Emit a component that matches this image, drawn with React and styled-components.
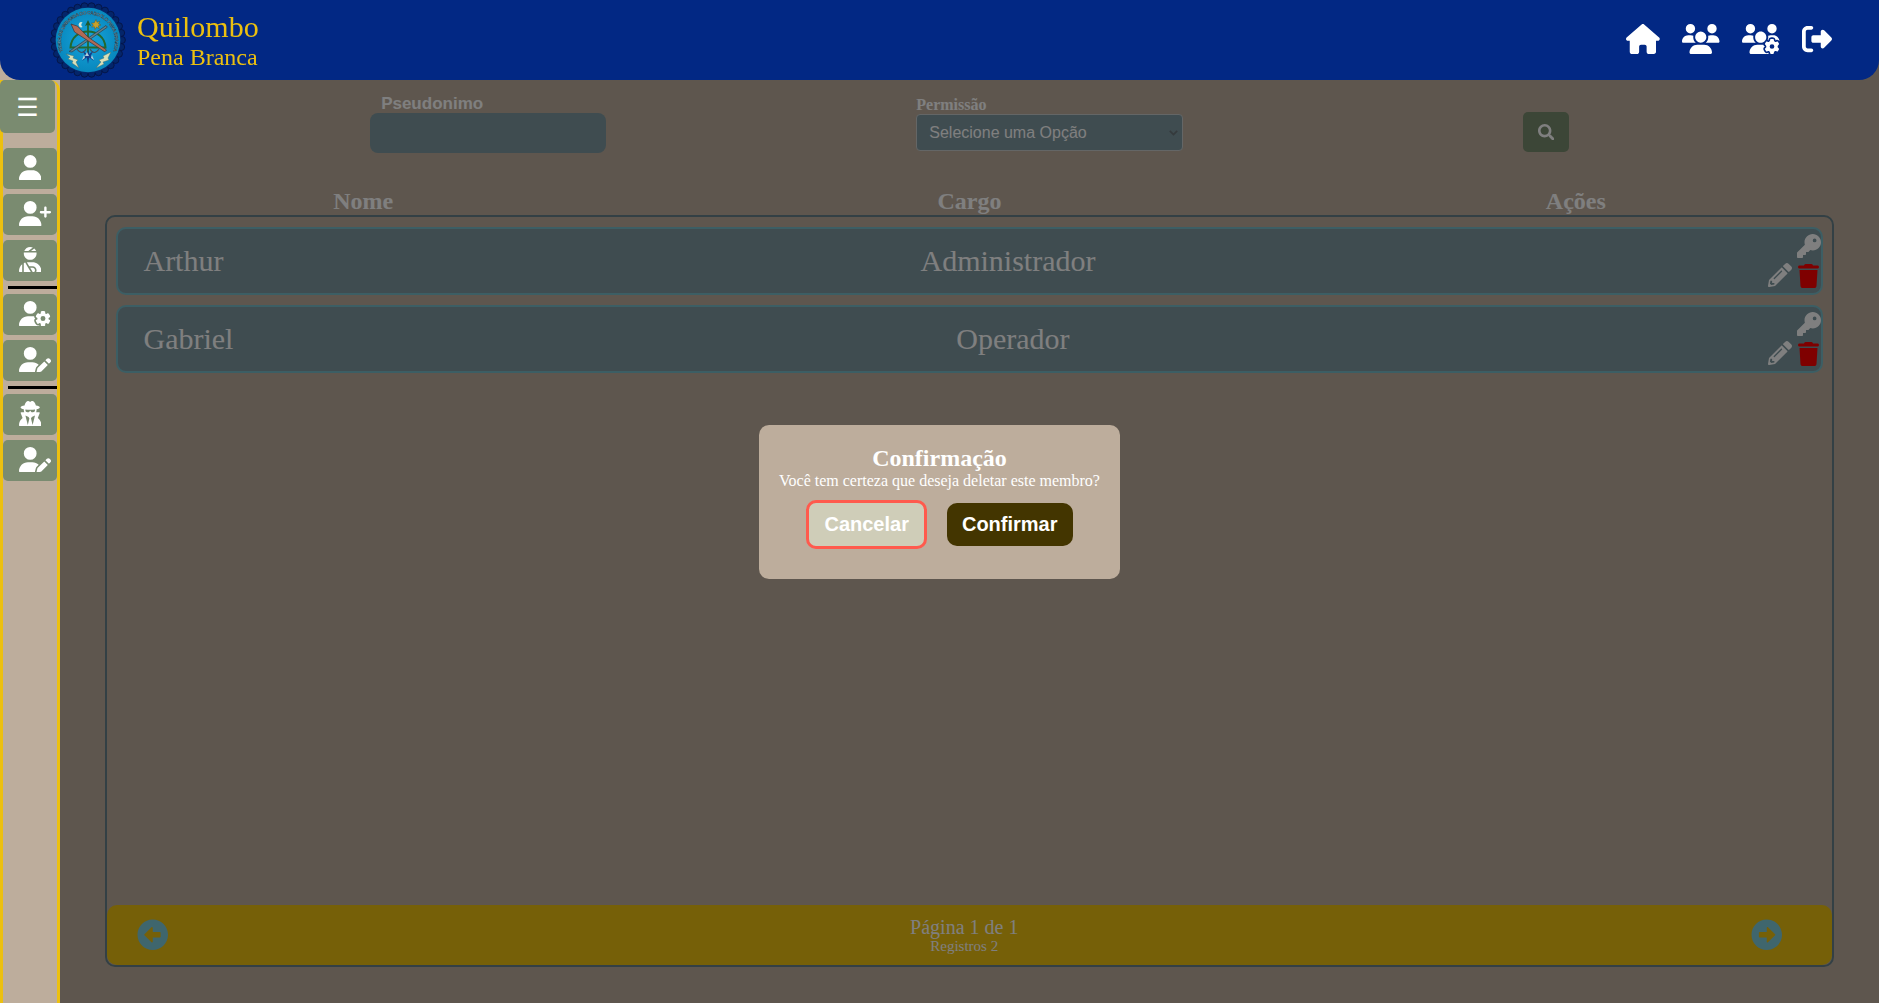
import React from "react";
import styled, { createGlobalStyle } from "styled-components";
import {
  FaHouse, FaUsers, FaUsersGear, FaRightFromBracket, FaUser, FaUserPlus,
  FaUserInjured, FaUserGear, FaUserPen, FaUserSecret, FaKey, FaTrash,
} from "react-icons/fa6";
import {
  FaSearch, FaPencilAlt, FaArrowAltCircleLeft, FaArrowAltCircleRight,
} from "react-icons/fa";

const serif = `"Liberation Serif", "Times New Roman", serif`;
const sans = `"Liberation Sans", Arial, sans-serif`;
const colors = {
  blue: "#022884",
  yellow: "#ecc010",
  sand: "#bdad9c",
  slate: "#7e98a0",
  teal: "#7eccda",
  moss: "#7a8b70",
};

const GlobalStyle = createGlobalStyle`
  *, *::before, *::after { box-sizing: border-box; margin: 0; padding: 0; }
  body { background: ${colors.sand}; color: #fff; font-family: ${serif}; overflow: hidden; }
  button { border: 0; color: inherit; font: inherit; cursor: pointer; }
  svg { display: block; flex: none; }
`;

const Page = styled.div`
  display: grid;
  grid-template: 80px 1fr / 60px 1fr;
  height: 100vh;
`;

const Header = styled.header`
  grid-area: 1 / 1 / 2 / 3;
  z-index: 4;
  display: flex;
  align-items: center;
  justify-content: space-between;
  padding: 0 47px 0 50px;
  background: ${colors.blue};
  border-radius: 0 0 20px 20px;
`;

const Brand = styled.div`
  display: flex;
  align-items: center;
  gap: 11px;
  color: ${colors.yellow};
`;

const BrandName = styled.h1`
  font-size: 30px;
  font-weight: 400;
  line-height: 34px;
`;

const BrandSub = styled.p`
  font-size: 24px;
  line-height: 27px;
`;

const Nav = styled.nav`
  display: flex;
  gap: 22.4px;
  font-size: 30px;
  padding-bottom: 2px;
`;

const HomeIcon = styled(FaHouse)`
  width: 1.125em;
`;

const MembersIcon = styled(FaUsers)`
  width: 1.25em;
`;

const MembersGearIcon = styled(FaUsersGear)`
  width: 1.25em;
`;

const Rail = styled.div`
  grid-area: 1 / 1 / 3 / 2;
  z-index: 3;
  display: flex;
  padding-top: 80px;
  background: ${colors.sand};
`;

const Sidebar = styled.aside`
  flex: 1;
  display: flex;
  flex-direction: column;
  gap: 5px;
  border: solid ${colors.yellow};
  border-width: 0 3px;
  border-radius: 0 10px 0 0;
`;

const MenuToggle = styled.button`
  width: 55px;
  height: 53px;
  margin: 0 0 10px -3px;
  border-radius: 5px;
  background: ${colors.moss};
  font: 25px/51px "DejaVu Sans", sans-serif;
  padding-top: 2px;
`;

const SideButton = styled.button`
  display: flex;
  align-items: center;
  height: 41px;
  padding: 0 0 2px 16px;
  border-radius: 5px;
  background: ${colors.moss};
  font-size: 25.6px;

  svg {
    width: ${(p) => (p.$wide ? "1.25em" : "0.875em")};
  }
`;

const Divider = styled.hr`
  height: 3px;
  margin-left: 5px;
  border: 0;
  background: #000;
`;

const Main = styled.main`
  grid-area: 2 / 2 / 3 / 3;
  display: flex;
  flex-direction: column;
`;

const Filters = styled.form`
  display: flex;
  justify-content: space-evenly;
  align-items: flex-start;
  height: 107px;
  padding-top: 13px;
`;

const Field = styled.div`
  display: flex;
  flex-direction: column;
`;

const PseudoLabel = styled.label`
  padding: 1px 0 0 11px;
  font: bold 17px/19px ${sans};
`;

const PseudoInput = styled.input`
  width: 236px;
  height: 40px;
  border: 0;
  border-radius: 8px;
  background: ${colors.slate};
`;

const RoleLabel = styled.label`
  padding-top: 3px;
  font: bold 16px/18px ${serif};
`;

const RoleSelect = styled.div`
  display: flex;
  align-items: center;
  justify-content: space-between;
  width: 266.5px;
  height: 37px;
  padding: 0 4px 0 12px;
  border: 1px solid #c8cccc;
  border-radius: 4px;
  background: ${colors.slate};
  font: 16px/18px ${sans};
`;

const SearchButton = styled.button`
  display: grid;
  place-items: center;
  width: 46px;
  height: 40px;
  margin: 19px 0 0 30px;
  border-radius: 5px;
  background: #788c6e;
  font-size: 16.5px;
`;

const Columns = styled.div`
  display: grid;
  grid-template-columns: repeat(3, 1fr);
  justify-items: center;
  height: 28px;
  font: bold 24px/28px ${serif};
`;

const Table = styled.section`
  display: flex;
  flex-direction: column;
  justify-content: space-between;
  align-self: center;
  width: 95%;
  height: 752px;
  border: 2px solid #66808a;
  border-radius: 10px;
`;

const Rows = styled.ul`
  display: grid;
  gap: 10px;
  padding: 10px 9px;
  list-style: none;
`;

const Row = styled.li`
  display: flex;
  align-items: center;
  justify-content: space-between;
  height: 68px;
  padding-left: 25px;
  border: 2px solid #78bcc8;
  border-radius: 10px;
  background: ${colors.slate};
  font-size: 30px;
`;

const Actions = styled.div`
  display: flex;
  flex-direction: column;
  align-items: flex-end;
  gap: 5px;
  width: 28px;
  padding-bottom: 1px;
  font-size: 24px;
`;

const ActionPair = styled.div`
  display: flex;
  gap: 6px;
  padding-right: 2px;
`;

const TrashIcon = styled(FaTrash)`
  width: 0.875em;
  margin-top: 1px;
  color: #f00;
`;

const Pager = styled.footer`
  display: flex;
  align-items: center;
  justify-content: space-between;
  height: 60px;
  padding: 0 49px 0 29.5px;
  border-radius: 10px;
  background: ${colors.yellow};
`;

const PagerButton = styled.button`
  background: none;
  color: ${colors.teal};
  font-size: 31.5px;
`;

const PagerText = styled.div`
  margin-left: 9px;
  text-align: center;
  font-size: 20px;
  line-height: 22px;
`;

const PagerCount = styled.p`
  font-size: 15px;
  line-height: 17px;
`;

const Overlay = styled.div`
  position: fixed;
  inset: 0;
  z-index: 2;
  display: grid;
  place-items: center;
  background: rgba(0, 0, 0, 0.5);
`;

const Dialog = styled.div`
  padding: 20px;
  border-radius: 10px;
  background: ${colors.sand};
  text-align: center;
`;

const DialogTitle = styled.h2`
  font-size: 24px;
  line-height: 27px;
`;

const DialogText = styled.p`
  font-size: 16px;
  line-height: 18px;
`;

const DialogActions = styled.div`
  display: flex;
  justify-content: center;
  align-items: center;
  gap: 20px;
  padding: 10px 0;
`;

const DialogButton = styled.button`
  padding: 10px 15px;
  border: ${(p) => (p.$cancel ? "3px solid #ff5a4d" : "0")};
  border-radius: 10px;
  background: ${(p) => (p.$cancel ? "#cfcdb8" : "#433500")};
  font: bold 20px/23px ${sans};
`;

const beads = Array.from({ length: 30 }, (_, i) => {
  const a = (i / 30) * Math.PI * 2;
  return [38 + 33.9 * Math.cos(a), 38 + 33.9 * Math.sin(a)];
});

const Crest = () => (
  <svg width="76" height="76" viewBox="0 0 76 76">
    <defs>
      <radialGradient id="sea">
        <stop offset="0" stopColor="#18a5dc" />
        <stop offset="1" stopColor="#0787bd" />
      </radialGradient>
      <path id="ring" d="M13 49.500A27 27 0 1 1 63 49.500" />
    </defs>
    {beads.map(([x, y], i) => (
      <circle key={i} cx={x} cy={y} r="3.5" fill="#04256a" stroke="#041445" strokeWidth=".9" />
    ))}
    <circle cx="38" cy="38" r="33.3" fill="#05286c" />
    <circle cx="38" cy="38" r="32.3" fill="url(#sea)" />
    <text fill="#a9bcc0" stroke="#17384c" strokeWidth=".35" fontFamily="Liberation Sans, sans-serif" fontWeight="700" fontSize="4.600">
      <textPath href="#ring" textLength="105">TENDA DE UMBANDA DO CABOCLO PENA BRANCA</textPath>
    </text>
    <path d="M32.6 20.600a2.6 2.6 0 1 0 0 4.4 2.5 2.5 0 0 1 0-4.4z" fill="#d5e7d8" />
    <path d="M46 17.5l1 2.8 2.8-1-1.3 2.6 2.5 1.1-2.7.8.8 2.8-2.5-1.5-1.6 2.4-.6-2.8-2.8.4 1.8-2.1-2-1.9 2.8-.2z" fill="#c7a12c" stroke="#574a20" strokeWidth=".4" />
    <path d="M20.500 45.500C21.500 24 54.500 24 55.500 45.500z" fill="none" stroke="#23682f" strokeWidth="2" />
    <path d="M38 53V22" stroke="#23652e" strokeWidth="1.700" />
    <path d="M38 18l3 6-3-1.300-3 1.300z" fill="#1e592f" />
    <path d="M19 49.500L56 23.500l1.300 1.700L22 50z" fill="#667f86" stroke="#283e4d" strokeWidth=".7" />
    <path d="M21 22l6.500 2.200L38 35 56.500 48l-1.700 1.800L36 37.500 24.500 30z" fill="#b16a55" stroke="#3c3436" strokeWidth=".7" />
    <path d="M27 47q5 7 9 0M49 47q-5 7-9 0" fill="none" stroke="#45515b" strokeWidth="1.200" />
    <path d="M38 48l1.200 4 4-3-2.500 5 3 5-4.500-3.500L38 62l-1.200-6.500L32.300 59l3-5-2.500-5 4 3z" fill="#123c8b" />
    <path d="M37 50l2 4h-4zM34 53l1 3-3 2zM42 53l-1 3 3 2z" fill="#b3ced8" />
    <path d="M16 52l8 2-1 2 5 2-2 2 3 6-7-5 1-2-5-2 2-2zM61 50l-8 4 1 2-5 2 2 2-5 6 8-4-1-2 6-2-1-2z" fill="#d8dfb9" stroke="#43645e" strokeWidth=".4" />
  </svg>
);

const sideItems = [
  { Icon: FaUser },
  { Icon: FaUserPlus, wide: true },
  { Icon: FaUserInjured },
  null,
  { Icon: FaUserGear, wide: true },
  { Icon: FaUserPen, wide: true },
  null,
  { Icon: FaUserSecret },
  { Icon: FaUserPen, wide: true },
];

const members = [
  { name: "Arthur", role: "Administrador" },
  { name: "Gabriel", role: "Operador" },
];

export default function App() {
  return (
    <Page>
      <GlobalStyle />
      <Header>
        <Brand>
          <Crest />
          <div>
            <BrandName>Quilombo</BrandName>
            <BrandSub>Pena Branca</BrandSub>
          </div>
        </Brand>
        <Nav>
          <HomeIcon />
          <MembersIcon />
          <MembersGearIcon />
          <FaRightFromBracket />
        </Nav>
      </Header>
      <Rail>
        <Sidebar>
          <MenuToggle>☰</MenuToggle>
          {sideItems.map((item, i) =>
            item ? (
              <SideButton key={i} $wide={item.wide}>
                <item.Icon />
              </SideButton>
            ) : (
              <Divider key={i} />
            )
          )}
        </Sidebar>
      </Rail>
      <Main>
        <Filters>
          <Field>
            <PseudoLabel>Pseudonimo</PseudoLabel>
            <PseudoInput />
          </Field>
          <Field>
            <RoleLabel>Permissão</RoleLabel>
            <RoleSelect>
              Selecione uma Opção
              <svg width="9" height="6" viewBox="0 0 9 6">
                <path d="M.8.8l3.700 3.700L8.200.8" fill="none" stroke="#6a7478" strokeWidth="1.700" />
              </svg>
            </RoleSelect>
          </Field>
          <SearchButton type="button"><FaSearch /></SearchButton>
        </Filters>
        <Columns>
          <span>Nome</span>
          <span>Cargo</span>
          <span>Ações</span>
        </Columns>
        <Table>
          <Rows>
            {members.map((m) => (
              <Row key={m.name}>
                <span>{m.name}</span>
                <span>{m.role}</span>
                <Actions>
                  <FaKey />
                  <ActionPair>
                    <FaPencilAlt />
                    <TrashIcon />
                  </ActionPair>
                </Actions>
              </Row>
            ))}
          </Rows>
          <Pager>
            <PagerButton><FaArrowAltCircleLeft /></PagerButton>
            <PagerText>
              Página 1 de 1
              <PagerCount>Registros 2</PagerCount>
            </PagerText>
            <PagerButton><FaArrowAltCircleRight /></PagerButton>
          </Pager>
        </Table>
      </Main>
      <Overlay>
        <Dialog>
          <DialogTitle>Confirmação</DialogTitle>
          <DialogText>Você tem certeza que deseja deletar este membro?</DialogText>
          <DialogActions>
            <DialogButton $cancel>Cancelar</DialogButton>
            <DialogButton>Confirmar</DialogButton>
          </DialogActions>
        </Dialog>
      </Overlay>
    </Page>
  );
}
